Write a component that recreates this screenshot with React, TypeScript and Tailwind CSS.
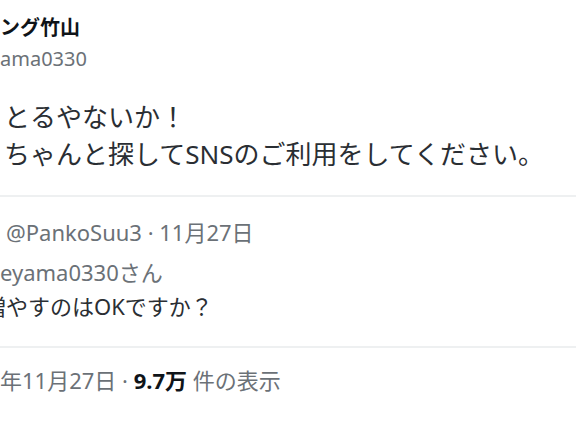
import React from 'react'

const FONT = { fontFamily: '"Noto Sans", "Noto Sans CJK JP", sans-serif' }

export default function App() {
  return (
    <div className="w-[576px] h-[430px] overflow-hidden bg-white" style={FONT}>
      {/* 元ツイート */}
      <div className="pt-[14px]">
        <p className="text-[20px] leading-[28px] font-bold text-[#0f1419] whitespace-nowrap">ング竹山</p>
        <p className="mt-[3px] text-[20px] leading-[28px] text-[#6b7177] whitespace-nowrap">ama0330</p>
        <div className="mt-[26px] pl-[4px] text-[26px] leading-[37px] text-[#2a2e33] whitespace-nowrap">
          <p>とるやないか！</p>
          <p>ちゃんと探してSNSのご利用をしてください。</p>
        </div>
      </div>

      <div className="mt-[22px] h-[2px] bg-[#eef0f1]" />

      {/* リプライ */}
      <div className="pt-[18px] pb-[23px] text-[22px] whitespace-nowrap">
        <p className="pl-[6px] leading-[34px] text-[#6b7177]">@PankoSuu3 · 11月27日</p>
        <p className="mt-[6px] leading-[34px] text-[#6b7177]">eyama0330さん</p>
        <p className="leading-[34px] text-[#2a2e33] -ml-[16px]">増やすのはOKですか？</p>
      </div>

      <div className="h-[2px] bg-[#eef0f1]" />

      <p className="pt-[15px] text-[22px] leading-[34px] text-[#6b7177] whitespace-nowrap">
        年11月27日 · <span className="font-bold text-[#0f1419]">9.7万</span> 件の表示
      </p>
    </div>
  )
}
